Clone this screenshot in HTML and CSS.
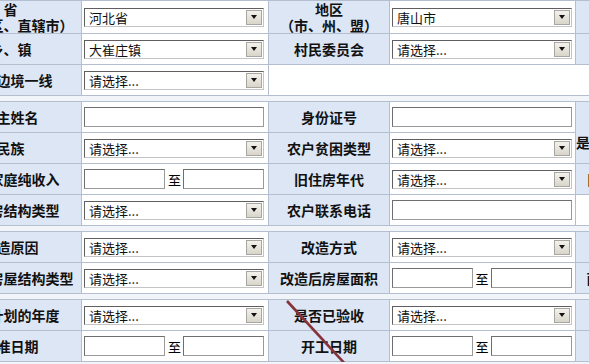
FILE: index.html
```html
<!DOCTYPE html>
<html lang="zh-CN">
<head>
    <meta charset="UTF-8">
    <title>农村危房改造信息登记</title>
    <link rel="stylesheet" href="styles.css">
</head>
<body>

<div class="sheet">
    <!-- 地址 -->
    <table class="form">
        <colgroup><col class="c1"><col class="c2"><col class="c3"><col class="c4"><col class="c5"></colgroup>
        <tr class="tall">
            <td class="label">省<br>（自治区、直辖市）</td>
            <td><div class="select"><span class="val">河北省</span><span class="arrow"></span></div></td>
            <td class="label">地区<br>（市、州、盟）</td>
            <td><div class="select"><span class="val">唐山市</span><span class="arrow"></span></div></td>
            <td class="label"></td>
        </tr>
        <tr>
            <td class="label">乡、镇</td>
            <td><div class="select"><span class="val">大崔庄镇</span><span class="arrow"></span></div></td>
            <td class="label">村民委员会</td>
            <td><div class="select"><span class="val">请选择...</span><span class="arrow"></span></div></td>
            <td class="label"></td>
        </tr>
        <tr>
            <td class="label">是否边境一线</td>
            <td><div class="select"><span class="val">请选择...</span><span class="arrow"></span></div></td>
            <td colspan="3"></td>
        </tr>
    </table>

    <!-- 农户信息 -->
    <table class="form">
        <colgroup><col class="c1"><col class="c2"><col class="c3"><col class="c4"><col class="c5"></colgroup>
        <tr>
            <td class="label">户主姓名</td>
            <td><div class="input"></div></td>
            <td class="label">身份证号</td>
            <td><div class="input"></div></td>
            <td class="label low" rowspan="2">是否享受危改补助过</td>
        </tr>
        <tr>
            <td class="label">民族</td>
            <td><div class="select"><span class="val">请选择...</span><span class="arrow"></span></div></td>
            <td class="label">农户贫困类型</td>
            <td><div class="select"><span class="val">请选择...</span><span class="arrow"></span></div></td>
        </tr>
        <tr>
            <td class="label">农户家庭纯收入</td>
            <td><div class="range"><div class="input"></div><span>至</span><div class="input"></div></div></td>
            <td class="label">旧住房年代</td>
            <td><div class="select"><span class="val">请选择...</span><span class="arrow"></span></div></td>
            <td class="label">目前住房安全性</td>
        </tr>
        <tr>
            <td class="label">现住房结构类型</td>
            <td><div class="select"><span class="val">请选择...</span><span class="arrow"></span></div></td>
            <td class="label">农户联系电话</td>
            <td><div class="input"></div></td>
            <td></td>
        </tr>
    </table>

    <!-- 改造信息 -->
    <table class="form">
        <colgroup><col class="c1"><col class="c2"><col class="c3"><col class="c4"><col class="c5"></colgroup>
        <tr>
            <td class="label">改造原因</td>
            <td><div class="select"><span class="val">请选择...</span><span class="arrow"></span></div></td>
            <td class="label">改造方式</td>
            <td><div class="select"><span class="val">请选择...</span><span class="arrow"></span></div></td>
            <td class="label"></td>
        </tr>
        <tr>
            <td class="label">改造前房屋结构类型</td>
            <td><div class="select"><span class="val">请选择...</span><span class="arrow"></span></div></td>
            <td class="label">改造后房屋面积</td>
            <td><div class="range wide"><div class="input"></div><span>至</span><div class="input"></div></div></td>
            <td class="label">面积是否超标准</td>
        </tr>
    </table>

    <!-- 计划 -->
    <table class="form">
        <colgroup><col class="c1"><col class="c2"><col class="c3"><col class="c4"><col class="c5"></colgroup>
        <tr>
            <td class="label">列入计划的年度</td>
            <td><div class="select"><span class="val">请选择...</span><span class="arrow"></span></div></td>
            <td class="label">是否已验收</td>
            <td><div class="select"><span class="val">请选择...</span><span class="arrow"></span></div></td>
            <td class="label"></td>
        </tr>
        <tr>
            <td class="label">批准日期</td>
            <td><div class="range"><div class="input"></div><span>至</span><div class="input"></div></div></td>
            <td class="label">开工日期</td>
            <td><div class="range wide"><div class="input"></div><span>至</span><div class="input"></div></div></td>
            <td class="label"></td>
        </tr>
    </table>
</div>

<!-- hand-drawn mark on top of the screenshot -->
<svg class="mark" width="589" height="364" viewBox="0 0 589 364">
    <line x1="287" y1="301" x2="347" y2="366" stroke="#86333a" stroke-width="2.6"/>
</svg>

</body>
</html>
```

FILE: styles.css
```css
body {
    margin: 0;
    background: #f1f4f9;
    font-family: "Noto Sans CJK SC", sans-serif;
    overflow: hidden;
    position: relative;
}
.sheet {
    margin-left: -61px;
    width: 760px;
    display: flex;
    flex-direction: column;
    gap: 5px;
}
.form {
    border-collapse: collapse;
    table-layout: fixed;
    width: 756px;
    background: #fff;
    border: 1px solid #a9b5c6;
}
.c1 { width: 142px; }
.c2 { width: 187px; }
.c3 { width: 121px; }
.c4 { width: 186px; }
.c5 { width: 120px; }

.form td {
    border: 1px solid #b3bfcf;
    height: 30px;
    padding: 0 0 0 2px;
    vertical-align: middle;
    white-space: nowrap;
    overflow: hidden;
}
.form tr.tall td { height: 31px; }

.label {
    background: #dce6f5;
    text-align: center;
    font-weight: 700;
    font-size: 14px;
    line-height: 16px;
    color: #111;
}
.form td.label { padding: 0; }
.form td.low { padding-top: 18px; }

/* fake old-style select box */
.select {
    width: 178px;
    height: 17px;
    border: 1px solid;
    border-color: #5f5f5f #c4c4c4 #c4c4c4 #5f5f5f;
    background: #fff;
    display: flex;
    align-items: center;
    justify-content: space-between;
}
.val {
    font-size: 13px;
    line-height: 17px;
    padding-left: 4px;
    color: #111;
}
.arrow {
    width: 14px;
    height: 13px;
    margin-right: 1px;
    border: 1px solid #a8a6a0;
    background: linear-gradient(#f3f1eb, #d9d5ca);
    display: flex;
    align-items: center;
    justify-content: center;
}
.arrow::after {
    content: "";
    border-left: 3px solid transparent;
    border-right: 3px solid transparent;
    border-top: 4px solid #111;
}

.input {
    width: 178px;
    height: 18px;
    border: 1px solid #6f6f6f;
    border-right-color: #9a9a9a;
    border-bottom-color: #9a9a9a;
    background: #fff;
}
.range {
    display: flex;
    align-items: center;
    width: 180px;
}
.range .input { width: 80px; }
.range span {
    font-size: 13px;
    margin: 0 2px 0 3px;
}
.range.wide span { margin: 0 2px 0 2px; }

.mark {
    position: absolute;
    top: 0;
    left: 0;
    pointer-events: none;
}
```
